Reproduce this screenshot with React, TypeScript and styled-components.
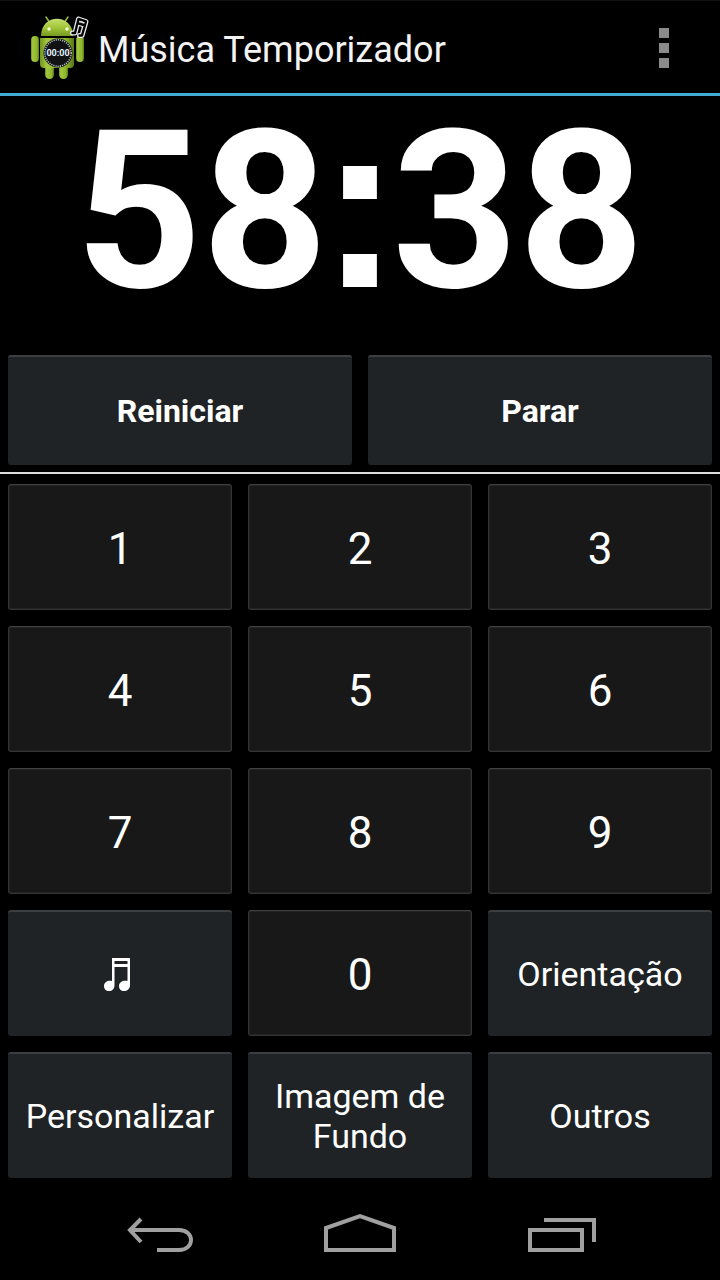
import React from "react";
import styled, { createGlobalStyle, css } from "styled-components";

const GlobalStyle = createGlobalStyle`
  * { box-sizing: border-box; }
  body {
    margin: 0;
    background: #000;
    color: #fff;
    font-family: Roboto, "Noto Sans", sans-serif;
  }
`;

const Screen = styled.div`
  display: flex;
  flex-direction: column;
  min-height: 100vh;
  background: #000;
`;

const ActionBar = styled.header`
  display: flex;
  align-items: center;
  height: 96px;
  padding: 2px 32px 0 24px;
  border-top: 1px solid #111;
  border-bottom: 3px solid #42abd3;
`;

const AppIcon = styled.svg`
  width: 68px;
  height: 68px;
  margin-right: 6px;
  flex: none;
`;

const Title = styled.h1`
  flex: 1;
  margin: 0;
  padding-top: 4px;
  font-size: 36px;
  line-height: 44px;
  font-weight: 400;
  color: #f3f3f3;
`;

const MenuButton = styled.button`
  display: flex;
  align-items: center;
  justify-content: center;
  width: 48px;
  height: 64px;
  padding: 0;
  border: 0;
  background: none;
`;

const Timer = styled.time`
  display: flex;
  flex: 1;
  justify-content: center;
  min-height: 251px;
  font-size: 220px;
  line-height: 232px;
  font-weight: 700;
`;

const Colon = styled.span`
  margin: 0 -8px;
  font-family: "Liberation Sans", Arial, sans-serif;
  font-size: 240px;
  line-height: 216px;
`;

const Actions = styled.div`
  display: grid;
  grid-template-columns: 1fr 1fr;
  gap: 16px;
  padding: 8px 8px 7px;
  border-bottom: 2px solid #dcdcdc;
`;

const Keypad = styled.main`
  display: grid;
  grid-template-columns: repeat(3, 1fr);
  grid-auto-rows: 126px;
  gap: 16px;
  padding: 10px 8px 6px;
`;

const buttonBase = css`
  display: flex;
  align-items: center;
  justify-content: center;
  min-width: 0;
  border-radius: 3px;
  color: #fff;
  font-family: inherit;
`;

const DigitKey = styled.button`
  ${buttonBase}
  padding: 4px 0 0;
  border: 1px solid #343434;
  border-top-color: #424242;
  box-shadow: inset 0 0 0 1px #222;
  background: #181818;
  font-size: 44px;
  line-height: 52px;
`;

const SlateButton = styled.button<{ $strong?: boolean }>`
  ${buttonBase}
  min-height: 110px;
  padding: 0 16px;
  border: 0;
  border-top: 2px solid #3c3f41;
  background: #1f2326;
  font-size: ${(p) => (p.$strong ? "32px" : "34px")};
  line-height: 40px;
  font-weight: ${(p) => (p.$strong ? 700 : 400)};
`;

const NavBar = styled.nav`
  display: flex;
  align-items: center;
  justify-content: center;
  gap: 104px;
  height: 96px;
`;

const NavButton = styled.button`
  display: flex;
  width: 96px;
  height: 72px;
  padding: 0;
  border: 0;
  background: none;
  color: #a0a0a0;
`;

function AndroidLogo() {
  return (
    <AppIcon viewBox="0 0 68 68" aria-hidden="true">
      <defs>
        <linearGradient id="body" x1="0" y1="0" x2="1" y2="0">
          <stop offset="0" stopColor="#6f9420" />
          <stop offset="0.2" stopColor="#a3c640" />
          <stop offset="0.75" stopColor="#8db52c" />
          <stop offset="1" stopColor="#587816" />
        </linearGradient>
        <linearGradient id="head" x1="0" y1="0" x2="0" y2="1">
          <stop offset="0" stopColor="#c5df70" />
          <stop offset="0.5" stopColor="#a2c738" />
          <stop offset="1" stopColor="#769b22" />
        </linearGradient>
      </defs>
      <path d="M22 3 L26 9 M44 3 L40 9" stroke="#9cbb40" strokeWidth="1.5" strokeLinecap="round" />
      <path d="M17 22 C17 -1 49 -1 49 22 Z" fill="url(#head)" />
      <circle cx="25" cy="15" r="1.7" fill="#f5f8dc" />
      <circle cx="43" cy="15" r="1.7" fill="#f5f8dc" />
      <rect x="7" y="22" width="8" height="26" rx="4" fill="url(#body)" />
      <rect x="52" y="22" width="8" height="26" rx="4" fill="url(#body)" />
      <rect x="21" y="44" width="9" height="21" rx="4.5" fill="url(#body)" />
      <rect x="35" y="44" width="9" height="21" rx="4.5" fill="url(#body)" />
      <path d="M16 24 H50 V50 Q50 54 46 54 H20 Q16 54 16 50 Z" fill="url(#body)" />
      <circle cx="34" cy="39" r="14.5" fill="#101214" />
      <circle cx="34" cy="39" r="13.2" fill="none" stroke="#aeb6ba" strokeWidth="1.6" strokeDasharray="1.2 1" />
      <text x="34" y="42" textAnchor="middle" fontFamily="Roboto, sans-serif" fontSize="9" fontWeight="700" fill="#e2f4ff">00:00</text>
      <g fill="none" strokeLinejoin="round">
        <path d="M48.500 19 H51 L54.500 5 L62 7.500 L58 21.500 H55.500 M53.500 9 L61 11.500" stroke="#ececec" strokeWidth="5" strokeLinecap="round" />
        <path d="M48.500 19 H51 L54.500 5 L62 7.500 L58 21.500 H55.500 M53.500 9 L61 11.500" stroke="#050505" strokeWidth="2.4" strokeLinecap="round" />
        <path d="M56 7.300 L60.500 8.800" stroke="#dcdcdc" strokeWidth="1.1" />
      </g>
    </AppIcon>
  );
}

function MusicNotes() {
  return (
    <svg width="34" height="36" viewBox="0 0 34 36" aria-hidden="true">
      <path fill="#fff" fillRule="evenodd" d="M9 2H27V29C27 33 24 35 21 35C18 35 16 33 16 30C16 26 20 24 24.500 25V11H11.500V29C11.500 33 9 35 6 35C3 35 1 33 1 30C1 26 5 24 9 25ZM11.500 5V8H24.500V5Z" />
    </svg>
  );
}

export default function App() {
  return (
    <>
      <GlobalStyle />
      <Screen>
        <ActionBar>
          <AndroidLogo />
          <Title>Música Temporizador</Title>
          <MenuButton aria-label="Mais opções">
            <svg width="10" height="40" viewBox="0 0 10 40" fill="#8b8b8b">
              <path d="M0 0H10V10H0ZM0 15H10V25H0ZM0 30H10V40H0Z" />
            </svg>
          </MenuButton>
        </ActionBar>
        <Timer>
          <span>58</span>
          <Colon>:</Colon>
          <span>38</span>
        </Timer>
        <Actions>
          <SlateButton $strong>Reiniciar</SlateButton>
          <SlateButton $strong>Parar</SlateButton>
        </Actions>
        <Keypad>
          {[1, 2, 3, 4, 5, 6, 7, 8, 9].map((n) => (
            <DigitKey key={n}>{n}</DigitKey>
          ))}
          <SlateButton aria-label="Música">
            <MusicNotes />
          </SlateButton>
          <DigitKey>0</DigitKey>
          <SlateButton>Orientação</SlateButton>
          <SlateButton>Personalizar</SlateButton>
          <SlateButton>Imagem de Fundo</SlateButton>
          <SlateButton>Outros</SlateButton>
        </Keypad>
        <NavBar>
          <NavButton aria-label="Voltar">
            <svg width="96" height="72" viewBox="0 0 96 72" fill="none" stroke="currentColor" strokeWidth="4">
              <path d="M29 23L18 34L29 46M18 34H67C83 34 83 54 67 54H45" />
            </svg>
          </NavButton>
          <NavButton aria-label="Início">
            <svg width="96" height="72" viewBox="0 0 96 72" fill="none" stroke="currentColor" strokeWidth="4">
              <path d="M14 54V32L48 20L82 32V54Z" />
            </svg>
          </NavButton>
          <NavButton aria-label="Aplicativos recentes">
            <svg width="96" height="72" viewBox="0 0 96 72" fill="none" stroke="currentColor" strokeWidth="4">
              <path d="M18 34H70V54H18ZM32 24H82V46" />
            </svg>
          </NavButton>
        </NavBar>
      </Screen>
    </>
  );
}
